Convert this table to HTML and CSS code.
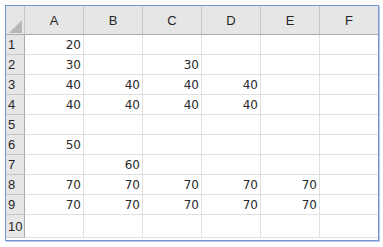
FILE: index.html
```html
<!DOCTYPE html>
<html>
<head>
<meta charset="utf-8">
<link rel="stylesheet" href="styles.css">
</head>
<body>
<div class="sheet">
  <div class="grid">
    <div class="corner"><svg width="19" height="29" viewBox="0 0 19 29"><polygon points="17,14 17,27 4,27" fill="#b7b7b7"/></svg></div>
    <div class="ch">A</div><div class="ch">B</div><div class="ch">C</div><div class="ch">D</div><div class="ch">E</div><div class="ch">F</div>

    <div class="rh">1</div><div class="c">20</div><div class="c"></div><div class="c"></div><div class="c"></div><div class="c"></div><div class="c"></div>
    <div class="rh">2</div><div class="c">30</div><div class="c"></div><div class="c">30</div><div class="c"></div><div class="c"></div><div class="c"></div>
    <div class="rh">3</div><div class="c">40</div><div class="c">40</div><div class="c">40</div><div class="c">40</div><div class="c"></div><div class="c"></div>
    <div class="rh">4</div><div class="c">40</div><div class="c">40</div><div class="c">40</div><div class="c">40</div><div class="c"></div><div class="c"></div>
    <div class="rh">5</div><div class="c"></div><div class="c"></div><div class="c"></div><div class="c"></div><div class="c"></div><div class="c"></div>
    <div class="rh">6</div><div class="c">50</div><div class="c"></div><div class="c"></div><div class="c"></div><div class="c"></div><div class="c"></div>
    <div class="rh">7</div><div class="c"></div><div class="c">60</div><div class="c"></div><div class="c"></div><div class="c"></div><div class="c"></div>
    <div class="rh">8</div><div class="c">70</div><div class="c">70</div><div class="c">70</div><div class="c">70</div><div class="c">70</div><div class="c"></div>
    <div class="rh">9</div><div class="c">70</div><div class="c">70</div><div class="c">70</div><div class="c">70</div><div class="c">70</div><div class="c"></div>
    <div class="rh">10</div><div class="c"></div><div class="c"></div><div class="c"></div><div class="c"></div><div class="c"></div><div class="c"></div>
  </div>
</div>
</body>
</html>
```
FILE: styles.css
```css
html, body {
  margin: 0;
  padding: 0;
  background: #ffffff;
}
body {
  padding: 5px;
  font-family: "Liberation Sans", Arial, sans-serif;
}
.sheet {
  width: 372px;
  height: 234px;
  border: 1px solid #7393d2;
  box-shadow: 1px 1px 0 #b9c8e8;
  overflow: hidden;
  background: #ffffff;
}
.grid {
  display: grid;
  grid-template-columns: 19px repeat(6, 59px);
  grid-template-rows: 29px repeat(9, 20px) 23px;
}
.grid > div {
  box-sizing: border-box;
  border-right: 1px solid #dadada;
  border-bottom: 1px solid #dadada;
}
.corner {
  background: #e6e6e6;
  border-right-color: #c6c6c6 !important;
  border-bottom-color: #ababab !important;
  padding: 0;
  line-height: 0;
}
.corner svg { display: block; margin-left: -1px; }
.ch {
  background: #e6e6e6;
  border-right-color: #c6c6c6 !important;
  border-bottom-color: #ababab !important;
  color: #262626;
  font-size: 13px;
  display: flex;
  align-items: center;
  justify-content: center;
  padding-top: 1px;
}
.rh {
  background: #e6e6e6;
  border-right-color: #ababab !important;
  border-bottom-color: #c6c6c6 !important;
  color: #262626;
  font-size: 13px;
  display: flex;
  align-items: center;
  padding-left: 2px;
}
.c {
  color: #2a2a2a;
  font-family: "DejaVu Sans", sans-serif;
  font-size: 12px;
  display: flex;
  align-items: center;
  justify-content: flex-end;
  padding-right: 2px;
  border-bottom-color: #e0e0e0 !important;
  border-right-color: #e0e0e0 !important;
}
```
